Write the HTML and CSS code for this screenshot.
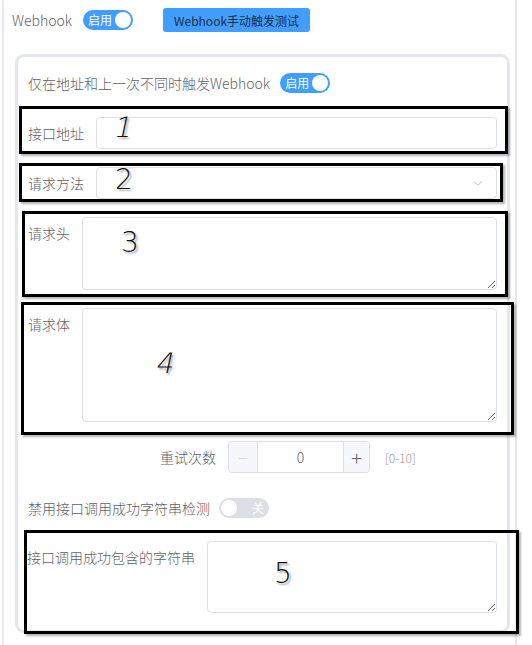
FILE: index.html
```html
<!DOCTYPE html>
<html lang="zh">
<head>
  <meta charset="UTF-8">
  <meta name="viewport" content="width=device-width, initial-scale=1">
  <title>Webhook</title>
  <link rel="stylesheet" href="styles.css">
</head>
<body>

<div class="panel">
  <div class="top-row">
    <span class="top-label">Webhook</span>
    <span class="switch on"><span class="switch-text">启用</span><span class="knob"></span></span>
    <button class="test-btn">Webhook手动触发测试</button>
  </div>

  <div class="card">
    <div class="switch-row">
      <span class="row-text">仅在地址和上一次不同时触发Webhook</span>
      <span class="switch on"><span class="switch-text">启用</span><span class="knob"></span></span>
    </div>

    <div class="form-item">
      <label class="label w68">接口地址</label>
      <input class="input" type="text">
    </div>

    <div class="form-item">
      <label class="label w68">请求方法</label>
      <div class="select">
        <svg width="12" height="12" viewBox="0 0 12 12"><path d="M2 4.5 L6 8 L10 4.5" fill="none" stroke="#c0c4cc" stroke-width="1"/></svg>
      </div>
    </div>

    <div class="form-item top">
      <label class="label w54">请求头</label>
      <textarea class="textarea h73"></textarea>
    </div>

    <div class="form-item top">
      <label class="label w54">请求体</label>
      <textarea class="textarea h114"></textarea>
    </div>

    <div class="form-item retry">
      <label class="label right">重试次数</label>
      <div class="number">
        <span class="num-btn minus">—</span>
        <span class="num-value">0</span>
        <span class="num-btn plus">+</span>
      </div>
      <span class="range">[0-10]</span>
    </div>

    <div class="switch-row check-row">
      <span class="row-text">禁用接口调用成功字符串检测</span>
      <span class="switch off"><span class="knob"></span><span class="switch-text">关</span></span>
    </div>

    <div class="form-item top">
      <label class="label w181">接口调用成功包含的字符串</label>
      <textarea class="textarea h72"></textarea>
    </div>
  </div>
</div>

<!-- annotation marks -->
<div class="mark box1"></div>
<div class="mark box2"></div>
<div class="mark box3"></div>
<div class="mark box4"></div>
<div class="mark box5"></div>
<span class="num n1">1</span>
<span class="num n2">2</span>
<span class="num n3">3</span>
<span class="num n4">4</span>
<span class="num n5">5</span>

</body>
</html>
```

FILE: styles.css
```css
body {
  margin: 0;
  background: #fff;
  font-family: "Noto Sans CJK SC", "Noto Sans", sans-serif;
  font-weight: 300;
  color: #606266;
  position: relative;
  height: 645px;
  overflow: hidden;
}
.panel {
  margin-left: 2px;
  width: 511px;
  height: 645px;
  border-left: 2px solid #e4e7ed;
  border-right: 2px solid #e4e7ed;
}
.top-row {
  display: flex;
  align-items: center;
  height: 24px;
  padding: 8px 0 0 8px;
}
.top-label {
  font-size: 14px;
  width: 71px;
}
.switch {
  display: inline-flex;
  align-items: center;
  width: 50px;
  height: 20px;
  border-radius: 10px;
  box-sizing: border-box;
  padding: 0 2px 0 5px;
  flex-shrink: 0;
}
.switch.on {
  background: #409eff;
  justify-content: space-between;
}
.switch.off {
  background: #dcdfe6;
  padding: 0 5px 0 2px;
  justify-content: space-between;
}
.switch-text {
  color: #fff;
  font-size: 12px;
  font-weight: 400;
  line-height: 20px;
}
.knob {
  width: 16px;
  height: 16px;
  border-radius: 50%;
  background: #fff;
}
.test-btn {
  margin-left: 30px;
  height: 24px;
  width: 147px;
  padding: 0;
  border: none;
  border-radius: 3px;
  background: #409eff;
  color: #1f2d3d;
  font-family: "Noto Sans CJK SC", "Noto Sans", sans-serif;
  font-size: 12px;
}
.card {
  margin: 22px 0 0 11px;
  width: 495px;
  height: 579px;
  box-sizing: border-box;
  border: 3px solid #e4e7ed;
  border-radius: 9px;
  padding: 16px 10px 0 10px;
}
.switch-row {
  display: flex;
  align-items: center;
  height: 20px;
  gap: 10px;
}
.row-text {
  font-size: 14px;
}
.form-item {
  display: flex;
  align-items: center;
  margin-top: 18px;
}
.form-item.top {
  align-items: flex-start;
}
.switch-row + .form-item {
  margin-top: 24px;
}
.label {
  font-size: 14px;
  line-height: 32px;
  color: #606266;
  flex-shrink: 0;
  white-space: nowrap;
}
.w68 { width: 68px; }
.w54 { width: 54px; }
.w181 { width: 180px; margin-left: -1px; }
.label.right {
  width: 188px;
  text-align: right;
  padding-right: 12px;
}
.input, .select {
  flex: 1;
  height: 32px;
  box-sizing: border-box;
  border: 1px solid #dcdfe6;
  border-radius: 4px;
  background: #fff;
}
.select {
  display: flex;
  align-items: center;
  justify-content: flex-end;
  padding-right: 12px;
}
.textarea {
  flex: 1;
  box-sizing: border-box;
  border: 1px solid #dcdfe6;
  border-radius: 4px;
  resize: vertical;
  margin: 0;
}
.h73 { height: 73px; }
.h114 { height: 114px; }
.h72 { height: 72px; }
.retry {
  margin-top: 19px;
}
.number {
  display: flex;
  width: 142px;
  height: 32px;
  box-sizing: border-box;
  border: 1px solid #dcdfe6;
  border-radius: 4px;
  overflow: hidden;
}
.num-btn {
  background: #f5f7fa;
  color: #606266;
  display: flex;
  align-items: center;
  justify-content: center;
}
.minus {
  width: 28px;
  border-right: 1px solid #dcdfe6;
  color: #c0c4cc;
  font-size: 11px;
}
.plus {
  width: 25px;
  border-left: 1px solid #dcdfe6;
  font-size: 20px;
  font-weight: 200;
}
.num-value {
  flex: 1;
  text-align: center;
  line-height: 30px;
  font-size: 14px;
}
.range {
  margin-left: 15px;
  font-size: 12px;
  color: #999;
}
.check-row {
  margin-top: 25px;
  gap: 9px;
}
.check-row + .form-item {
  margin-top: 23px;
}
.mark {
  position: absolute;
  box-sizing: border-box;
  border: 3px solid #000;
  box-shadow: 2px 2px 2px rgba(0, 0, 0, 0.3);
}
.box1 { left: 19px; top: 106px; width: 489px; height: 48px; }
.box2 { left: 19px; top: 163px; width: 484px; height: 39px; }
.box3 { left: 22px; top: 211px; width: 486px; height: 86px; }
.box4 { left: 21px; top: 302px; width: 493px; height: 133px; }
.box5 { left: 24px; top: 530px; width: 495px; height: 104px; }
.num {
  position: absolute;
  font-family: "DejaVu Sans", sans-serif;
  font-weight: 200;
  font-size: 28px;
  line-height: 28px;
  color: #111;
  text-shadow: 2px 2px 2px rgba(0, 0, 0, 0.35);
}
.n1 { left: 115px; top: 114px; transform: skewX(-12deg); }
.n2 { left: 115px; top: 166px; }
.n3 { left: 121px; top: 229px; }
.n4 { left: 157px; top: 350px; transform: skewX(-12deg); }
.n5 { left: 274px; top: 560px; }
```
